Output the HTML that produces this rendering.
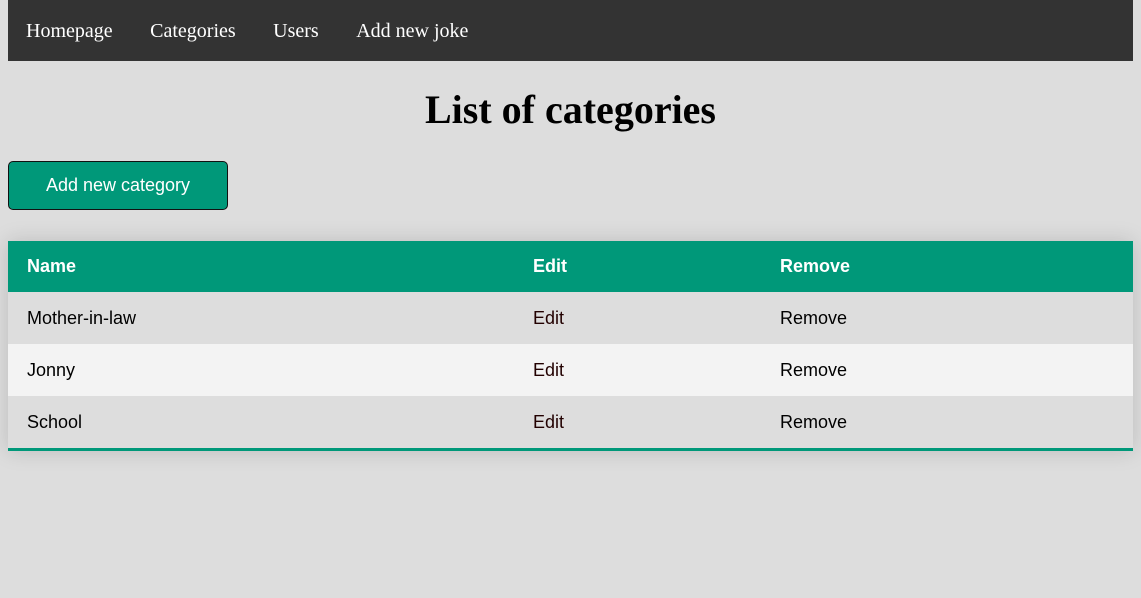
<!DOCTYPE html>
<html><head><style>
body{margin:8px;margin-top:0;background:#dddddd;font-family:"Liberation Serif",serif;width:1125px}
nav{background:#333;height:61px;display:flex;align-items:center;padding-left:18px}
nav a{color:#fff;font-size:20px;margin-right:37.5px;text-decoration:none;position:relative;top:1px}
h1{text-align:center;font-size:40px;margin:26px 0 28px;line-height:46px}
.btn{width:220px;height:49px;box-sizing:border-box;background:#009879;color:#fff;border:1px solid #111;border-radius:5px;font-family:"Liberation Sans",sans-serif;font-size:18px;display:flex;align-items:center;justify-content:center}
table{margin-top:31px;width:1125px;border-collapse:collapse;font-family:"Liberation Sans",sans-serif;font-size:18px;box-shadow:0 0 20px rgba(0,0,0,.15);border-bottom:3px solid #009879}
th{background:#009879;color:#fff;text-align:left;height:51px;padding:0 0 0 19px;font-weight:bold}
td{height:52px;padding:0 0 0 19px}
tr:nth-child(odd) td{background:#f3f3f3}
td.e{color:#200}
</style></head><body>
<nav><a>Homepage</a><a>Categories</a><a>Users</a><a>Add new joke</a></nav>
<h1>List of categories</h1>
<div class="btn">Add new category</div>
<table>
<tr><th style="width:487px">Name</th><th style="width:228px">Edit</th><th>Remove</th></tr>
<tr><td>Mother-in-law</td><td class="e">Edit</td><td>Remove</td></tr>
<tr><td>Jonny</td><td class="e">Edit</td><td>Remove</td></tr>
<tr><td>School</td><td class="e">Edit</td><td>Remove</td></tr>
</table>
</body></html>
